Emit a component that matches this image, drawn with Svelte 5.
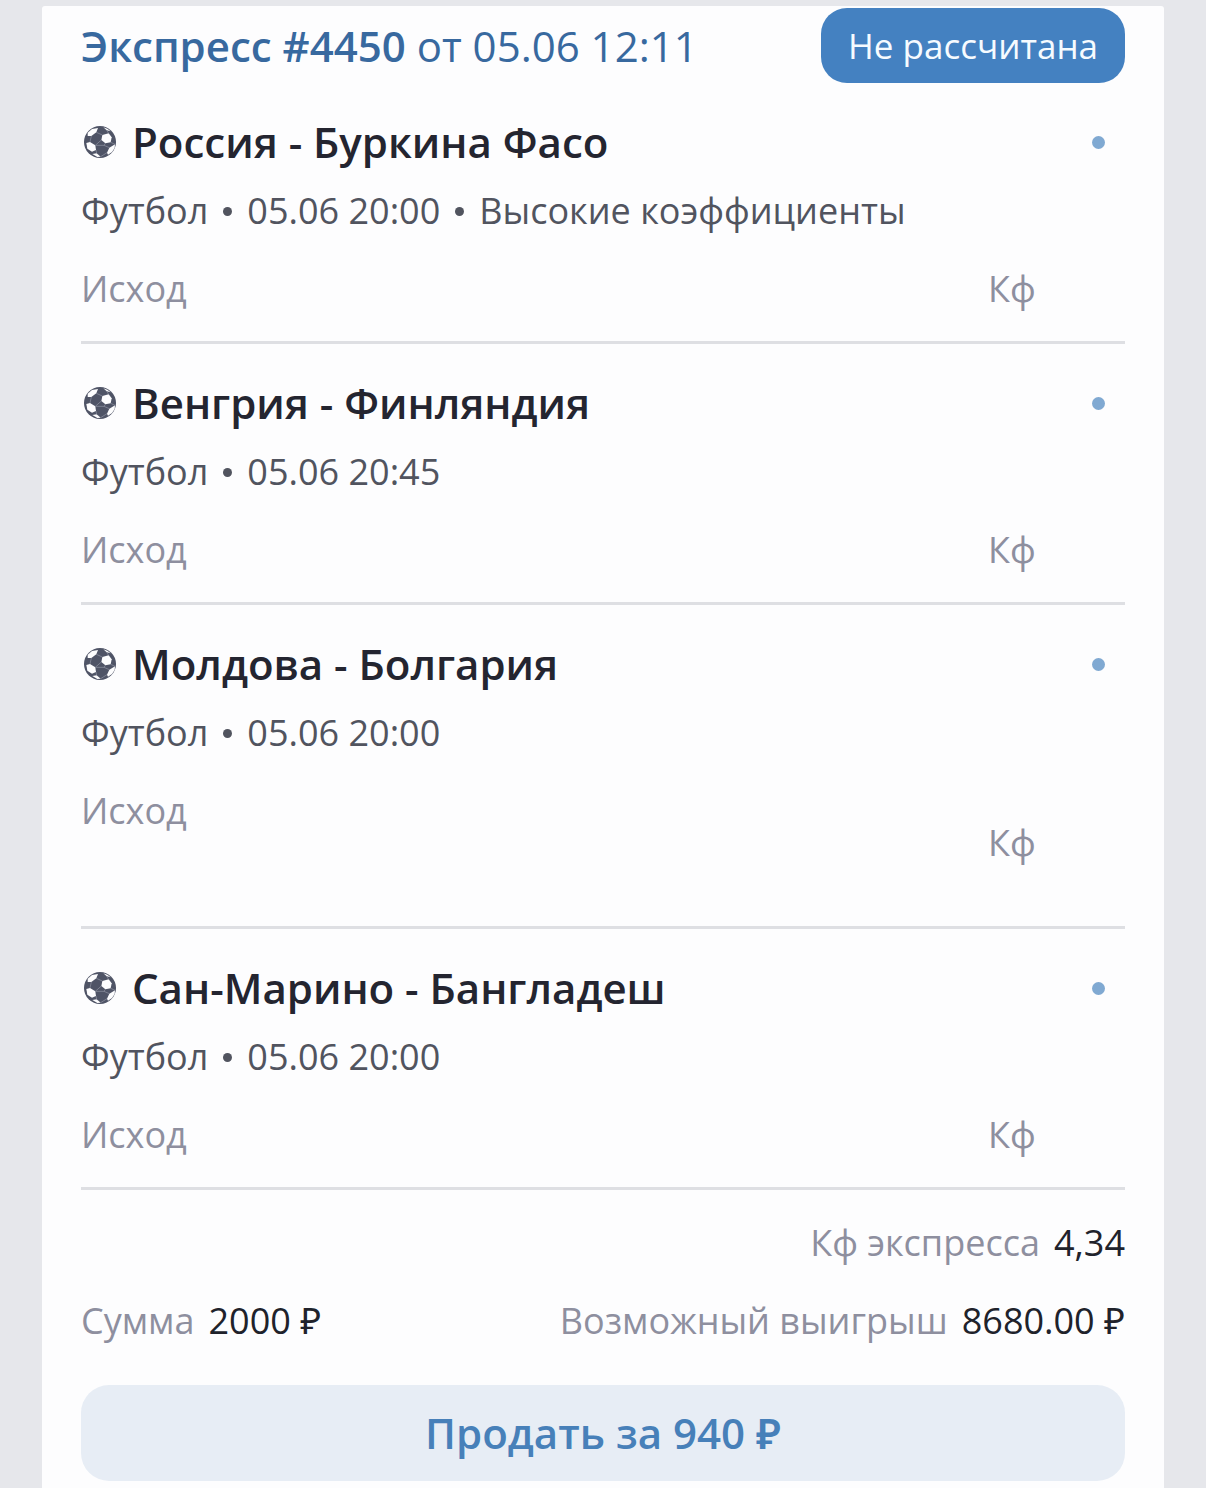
<script lang="ts">
  type Leg = { teams: string; details: string[]; tall?: boolean };

  const legs: Leg[] = [
    { teams: 'Россия - Буркина Фасо', details: ['Футбол', '05.06 20:00', 'Высокие коэффициенты'] },
    { teams: 'Венгрия - Финляндия', details: ['Футбол', '05.06 20:45'] },
    { teams: 'Молдова - Болгария', details: ['Футбол', '05.06 20:00'], tall: true },
    { teams: 'Сан-Марино - Бангладеш', details: ['Футбол', '05.06 20:00'] },
  ];
</script>

<main class="coupon">
  <header class="head">
    <h1><b>Экспресс #4450</b> от 05.06 12:11</h1>
    <span class="badge">Не рассчитана</span>
  </header>

  {#each legs as leg}
    <section class="leg">
      <div class="title">
        <svg class="ball" viewBox="0 0 96 96" aria-hidden="true">
          <circle cx="48" cy="48" r="48" fill="#4f5466" />
          <g fill="#fdfdfe">
            <path d="M11 20 L24 9 L42 6 L37 19 L22 30 L11 30 Z" />
            <path d="M55 27 L74 22 L83 34 L80 49 L64 52 L52 42 Z" />
            <path d="M7 51 L18 48 L34 58 L36 72 L24 77 L10 68 Z" />
            <path d="M93 55 L92 66 L84 78 L72 86 L69 80 L76 65 Z" />
            <path d="M25 84 L38 82 L50 92 L40 93 Z" />
            <path d="M58 4 L70 8 L80 16 L68 13 Z" />
          </g>
          <g fill="none" stroke="#9296a5" stroke-width="2">
            <path d="M37 19 L55 27 M22 30 L18 48 M34 58 L52 42 M64 52 L60 58 M34 58 L60 58 L76 65 M74 22 L68 13 M80 49 L93 55 M36 72 L38 82 M69 80 L50 92" />
          </g>
        </svg>
        <h2>{leg.teams}</h2>
        <i class="dot"></i>
      </div>
      <p class="details">
        {#each leg.details as item, i}
          {#if i > 0}<i class="sep"></i>{/if}
          <span>{item}</span>
        {/each}
      </p>
      <div class="market" class:tall={leg.tall}>
        <span>Исход</span>
        <span class="odds">Кф</span>
      </div>
    </section>
  {/each}

  <footer class="totals">
    <p class="row end"><span class="pair">Кф экспресса <b>4,34</b></span></p>
    <p class="row">
      <span class="pair">Сумма <b>2000 ₽</b></span>
      <span class="pair">Возможный выигрыш <b>8680.00 ₽</b></span>
    </p>
    <button type="button" class="sell">Продать за 940 ₽</button>
  </footer>
</main>

<style>
:global(body) {
  background: #e6e7eb;
}
.coupon {
  margin: 6px 42px 0;
  padding: 2px 39px 7px;
  background: #fdfdfe;
  border-radius: 3px 3px 0 0;
  font-family: "Open Sans", "Noto Sans", sans-serif;
  font-size: 36px;
  line-height: 48px;
  color: #51545f;
}
h1, h2, p {
  margin: 0;
}
.head {
  display: flex;
  align-items: center;
  justify-content: space-between;
}
h1 {
  font-size: 42px;
  font-weight: 400;
  color: #38699f;
}
h1 b {
  font-weight: 600;
}
.badge {
  padding: 0 27px;
  border-radius: 26px;
  background: #4481c1;
  color: #f6fbff;
  font-size: 35px;
  line-height: 75px;
}
.leg {
  padding: 32px 0 28px;
  border-bottom: 3px solid #dedfe3;
}
.title {
  display: flex;
  align-items: center;
  height: 54px;
  padding: 0 20px 0 3px;
}
.ball {
  width: 32px;
  height: 32px;
  margin-right: 16px;
}
h2 {
  font-size: 42px;
  font-weight: 600;
  line-height: 54px;
  color: #242530;
}
.dot {
  width: 13px;
  height: 13px;
  margin-left: auto;
  border-radius: 50%;
  background: #80a9d2;
}
.details {
  display: flex;
  align-items: center;
  margin-top: 18px;
}
.sep {
  width: 9px;
  height: 9px;
  margin: 0 15px;
  border-radius: 50%;
  background: #51545f;
}
.market {
  display: grid;
  grid-template-columns: 1fr 137px;
  margin-top: 30px;
  color: #8e8f9f;
}
.tall {
  min-height: 111px;
}
.odds {
  align-self: center;
}
.totals {
  padding-top: 29px;
}
.row {
  display: flex;
  justify-content: space-between;
  margin-bottom: 30px;
  color: #8e8f9f;
}
.end {
  justify-content: flex-end;
}
.pair {
  display: flex;
  gap: 14px;
}
.pair b {
  font-weight: 400;
  color: #20222b;
}
.sell {
  display: block;
  width: 100%;
  height: 96px;
  margin-top: 40px;
  border: 0;
  border-radius: 28px;
  background: #e7edf5;
  color: #4780b9;
  font: 600 42px/54px "Open Sans", "Noto Sans", sans-serif;
  cursor: pointer;
}
</style>
